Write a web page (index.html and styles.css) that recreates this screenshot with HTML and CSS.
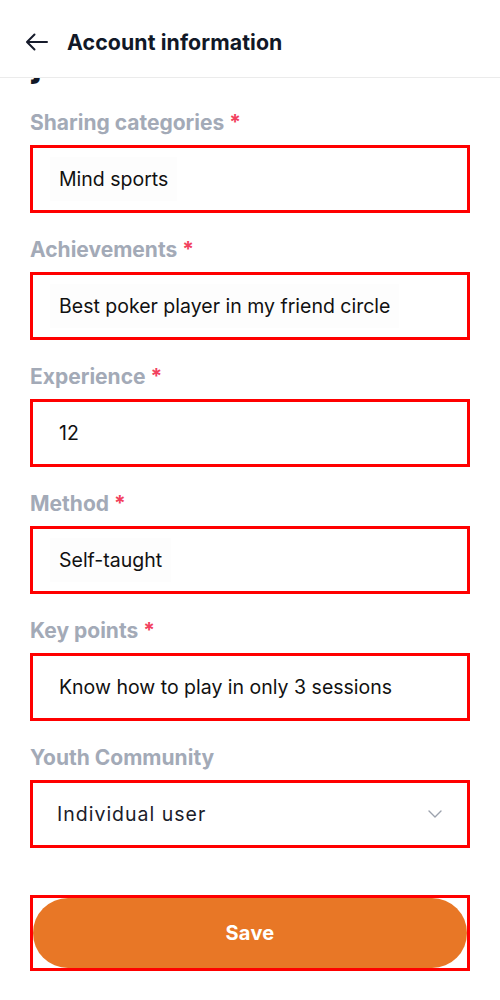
FILE: index.html
```html
<!DOCTYPE html>
<html>
<head>
<meta charset="utf-8">
<link rel="stylesheet" href="styles.css">
</head>
<body>
<div class="app">
  <header class="topbar">
    <svg class="back" width="24" height="24" viewBox="0 0 24 24" fill="none" stroke="#161b2b" stroke-width="2" stroke-linecap="round" stroke-linejoin="round"><path d="M22 12H2.5M9.5 4.5L2 12l7.5 7.5"/></svg>
    <h1 class="title">Account information</h1>
  </header>
  <main class="content">
    <div class="section-clip"><h2 class="section">journal</h2></div>
    <div class="field">
      <label class="label">Sharing categories <span class="req">*</span></label>
      <div class="box"><span class="value hl">Mind sports</span></div>
    </div>
    <div class="field">
      <label class="label">Achievements <span class="req">*</span></label>
      <div class="box"><span class="value hl">Best poker player in my friend circle</span></div>
    </div>
    <div class="field">
      <label class="label">Experience <span class="req">*</span></label>
      <div class="box"><span class="value">12</span></div>
    </div>
    <div class="field">
      <label class="label">Method <span class="req">*</span></label>
      <div class="box"><span class="value hl">Self-taught</span></div>
    </div>
    <div class="field">
      <label class="label">Key points <span class="req">*</span></label>
      <div class="box"><span class="value">Know how to play in only 3 sessions</span></div>
    </div>
    <div class="field">
      <label class="label">Youth Community</label>
      <div class="box select">
        <span class="value sel">Individual user</span>
        <svg class="chev" width="14" height="8" viewBox="0 0 14 8" fill="none" stroke="#9ca2ad" stroke-width="1.4" stroke-linecap="round" stroke-linejoin="round"><path d="M1 1l6 6 6-6"/></svg>
      </div>
    </div>
    <div class="savebox">
      <button class="save">Save</button>
    </div>
  </main>
</div>
</body>
</html>
```

FILE: styles.css
```css
* { box-sizing: border-box; }
html, body { margin: 0; padding: 0; background: #fff; }
body { font-family: Inter, "Noto Sans", sans-serif; width: 500px; height: 1000px; overflow: hidden; }
.app { width: 500px; }
.topbar {
  height: 78px;
  display: flex;
  align-items: center;
  padding: 0 0 0 25px;
  border-bottom: 1px solid #ebebeb;
  background: #fff;
}
.back { display: block; margin-top: 6px; margin-right: 18px; }
.title { margin: 6px 0 0; font-size: 21.3px; font-weight: 700; color: #111827; letter-spacing: 0.1px; }
.content { padding: 0 30px; }
.section-clip { height: 9px; overflow: hidden; }
.section {
  margin: -33px 0 0 2px;
  font-size: 34px; font-weight: 800; line-height: 40px; color: #111827;
  height: 40px;
}
.field { margin-top: 24px; display: flex; flex-direction: column; }
.section-clip + .field { margin-top: 22.5px; }
.label {
  font-size: 21px; font-weight: 700; color: #a3aab7; line-height: 26px;
  margin-bottom: 9px; display: block;
}
.req { color: #f2415e; }
.box {
  height: 68px;
  border: 3px solid #ff0000;
  display: flex; align-items: center;
  padding-left: 17px;
  background: #fff;
}
.value { font-size: 19.5px; color: #111; padding: 0 9px; line-height: 44px; }
.hl { background: #fdfdfd; }
.select { justify-content: space-between; padding-right: 25px; }
.sel { letter-spacing: 1px; color: #1b1d2b; padding-left: 7px; }
.chev { display: block; }
.savebox {
  margin-top: 47px;
  height: 76px;
  border: 3px solid #ff0000;
  padding: 0;
}
.save {
  width: 100%; height: 100%;
  border: none; border-radius: 35px;
  background: #e87726; color: #fff;
  font-family: Inter, sans-serif; font-size: 20px; font-weight: 700;
  letter-spacing: 0.3px;
}
```
